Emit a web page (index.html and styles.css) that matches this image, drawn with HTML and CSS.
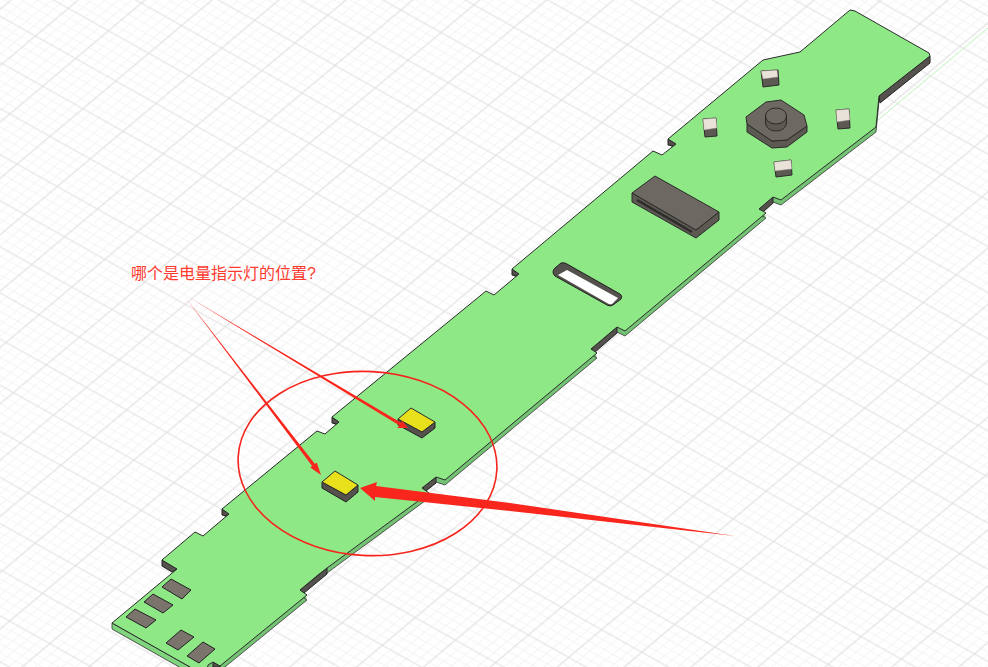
FILE: index.html
```html
<!DOCTYPE html>
<html lang="en">
<head>
    <meta charset="UTF-8">
    <meta name="viewport" content="width=device-width, initial-scale=1.0">
    <title>电量指示灯</title>
    <link rel="stylesheet" href="styles.css">
</head>
<body>
    <div class="canvas">
        <svg class="scene" width="988" height="667" viewBox="0 0 988 667">
            <defs>
                <pattern id="grid" width="50" height="50" patternUnits="userSpaceOnUse" patternTransform="matrix(.8038 .45 -.658 .554 68.3 8.3)">
                    <path class="grid-minor" d="M10 0V50M20 0V50M30 0V50M40 0V50M0 10H50M0 20H50M0 30H50M0 40H50"/>
                    <path class="grid-major" d="M0 0V50M50 0V50M0 0H50M0 50H50"/>
                </pattern>
                <path id="board" d="M850 10 855 11 929 53 930 56 879 96 876 127 781 200 773 197 759 209 766 213 625 331 617 327 591 349 597 353 445 480 436 477 422 488 429 493 327 568 318 575 300 590 307 595 220 666 213 662 208 665 206 676 112 623 177 569 162 560 195 532 203 536 229 514 222 509 317 431 325 434 339 422 332 417 486 291 494 295 519 274 512 269 653 151 662 155 676 144 668 139 763 60 800 52Z"/>
            </defs>

            <rect width="988" height="667" fill="#fff"/>
            <rect width="988" height="667" fill="url(#grid)"/>
            <path class="axis" d="M988 28 878 120"/>

            <!-- board thickness -->
            <use href="#board" class="side" y="3"/>
            <use href="#board" class="side outline" y="5"/>
            <path class="wall" d="M930 56 930 63 880 103 879 96Z"/>
            <path class="wall" d="M773 197 773 203 763 212 759 209Z"/>
            <path class="wall" d="M617 327 617 333 595 352 591 349Z"/>
            <path class="wall" d="M436 477 436 483 426 491 422 488Z"/>
            <path class="wall" d="M327 568 327 574 304 593 300 590Z"/>
            <path class="wall" d="M668 139 668 145 674 146 676 144Z"/>
            <path class="wall" d="M512 269 512 275 517 276 519 274Z"/>
            <path class="wall" d="M332 417 332 423 337 424 339 422Z"/>
            <path class="wall" d="M222 509 222 515 227 516 229 514Z"/>
            <path class="wall" d="M162 560 162 566 172 572 177 569Z"/>
            <path class="wall" d="M213 662 213 667 220 667 220 666Z"/>
            <path class="side-light" d="M112 623 112 629 188 672 206 676Z"/>

            <use href="#board" class="top"/>

            <!-- slot -->
            <path class="wall" d="M555 268 561 263Q564 262 567 264L620 294Q623 296 621 299L613 305Q610 307 607 305L555 276Q551 272 555 268Z"/>
            <path class="slot" d="M558 275 567 270 618 298 612 304Q610 305 607 303Z"/>

            <!-- switch -->
            <path class="part-side" d="M747 124 747 132 772 148 787 147 807 132 807 126 787 140 772 141Z"/>
            <path class="part-top" d="M746 117 766 102 781 100 804 115 807 126 787 140 772 141 747 124Z"/>
            <path class="part-side" d="M765.500 115V122C765.500 134 786.500 134 786.500 122V115Z"/>
            <ellipse class="part-top" cx="776" cy="116" rx="10.500" ry="8"/>

            <!-- small caps -->
            <path class="part-side" d="M761 71 778 70 779 85 763 87Z"/>
            <path class="cap" d="M761 71 777 70 778 77 763 79Z"/>
            <path class="part-side" d="M703 119 716 118 717 136 705 137Z"/>
            <path class="cap" d="M703 119 716 118 717 128 704 130Z"/>
            <path class="part-side" d="M836 110 849 109 850 128 838 129Z"/>
            <path class="cap" d="M836 110 849 109 850 120 837 122Z"/>
            <path class="part-side" d="M774 162 791 160 792 175 776 177Z"/>
            <path class="cap" d="M774 162 791 160 792 169 775 171Z"/>

            <!-- connector -->
            <path class="part-side" d="M632 193 632 202 696 238 719 220 719 212 696 230Z"/>
            <path class="part-top" d="M632 193 655 176 719 212 696 230Z"/>
            <path class="connector-slot" d="M637 200 692 232"/>

            <!-- pads -->
            <path class="pad" d="M162 587 171 579 191 590 182 599Z"/>
            <path class="pad" d="M144 602 153 594 173 605 163 613Z"/>
            <path class="pad" d="M126 617 135 609 156 620 146 628Z"/>
            <path class="pad" d="M166 643 181 630 194 637 178 650Z"/>
            <path class="pad" d="M187 656 203 642 215 649 199 663Z"/>

            <!-- leds -->
            <path class="wall" d="M398 419 398 425 422 438 435 428 435 422 422 432Z"/>
            <path class="led" d="M398 419 411 408 435 422 422 432Z"/>
            <path class="wall" d="M322 482 322 488 346 502 358 492 358 485 346 495Z"/>
            <path class="led" d="M322 482 335 471 358 485 346 495Z"/>

            <!-- annotation -->
            <ellipse class="ring" cx="367.500" cy="463.500" rx="129.500" ry="92" transform="rotate(3 367.500 463.500)"/>
            <path class="arrow" d="M185 297 314.900 464 316.700 462.600 321 475 310.300 467.400 312.100 466Z"/>
            <path class="arrow" d="M190 298 401.500 423 402 420.500 408 428 397 428 399.500 425.500Z"/>
            <path class="arrow" d="M735 536 510 503 376 486 377 482 360 488 375 501 375 497 510 511Z"/>
        </svg>
        <div class="note">哪个是电量指示灯的位置?</div>
    </div>
</body>
</html>
```

FILE: styles.css
```css
body{
    margin: 0;
    background-color: #fff;
}
.canvas{
    position: relative;
    width: 988px;
    height: 667px;
    overflow: hidden;
}
.scene{
    display: block;
}
.note{
    position: absolute;
    left: 131px;
    top: 264px;
    font-family: "Liberation Sans", "Noto Sans CJK SC", sans-serif;
    font-size: 16px;
    line-height: 20px;
    color: #ff3b2f;
    white-space: nowrap;
}
.grid-minor{
    fill: none;
    stroke: #f2f2f2;
    stroke-width: 1;
}
.grid-major{
    fill: none;
    stroke: #dedede;
    stroke-width: 1.2;
}
.axis{
    fill: none;
    stroke: #bdf2bd;
    stroke-width: 1;
}
.side{
    fill: #74c274;
}
.outline{
    stroke: #333;
    stroke-width: .8;
}
.side-light{
    fill: #7fd47d;
    stroke: #333;
    stroke-width: .8;
    stroke-linejoin: round;
}
.wall{
    fill: #55524e;
    stroke: #222;
    stroke-width: 1;
    stroke-linejoin: round;
}
.top{
    fill: #8fe886;
    stroke: #2c2c2c;
    stroke-width: 1;
    stroke-linejoin: round;
}
.slot{
    fill: #fff;
    stroke: none;
}
.part-top{
    fill: #6d6861;
    stroke: #2a2a2a;
    stroke-width: 1;
    stroke-linejoin: round;
}
.part-side{
    fill: #5c5852;
    stroke: #2a2a2a;
    stroke-width: 1;
    stroke-linejoin: round;
}
.cap{
    fill: #e8e2d8;
    stroke: #8a857d;
    stroke-width: .5;
}
.connector-slot{
    fill: none;
    stroke: #2e2c2a;
    stroke-width: 2.5;
}
.pad{
    fill: #7a746c;
    stroke: #222;
    stroke-width: 1;
    stroke-linejoin: round;
}
.led{
    fill: #e8e01a;
    stroke: #2a2a2a;
    stroke-width: 1;
    stroke-linejoin: round;
}
.ring{
    fill: none;
    stroke: #f5241c;
    stroke-width: 1.6;
}
.arrow{
    fill: #f8261c;
}
```
